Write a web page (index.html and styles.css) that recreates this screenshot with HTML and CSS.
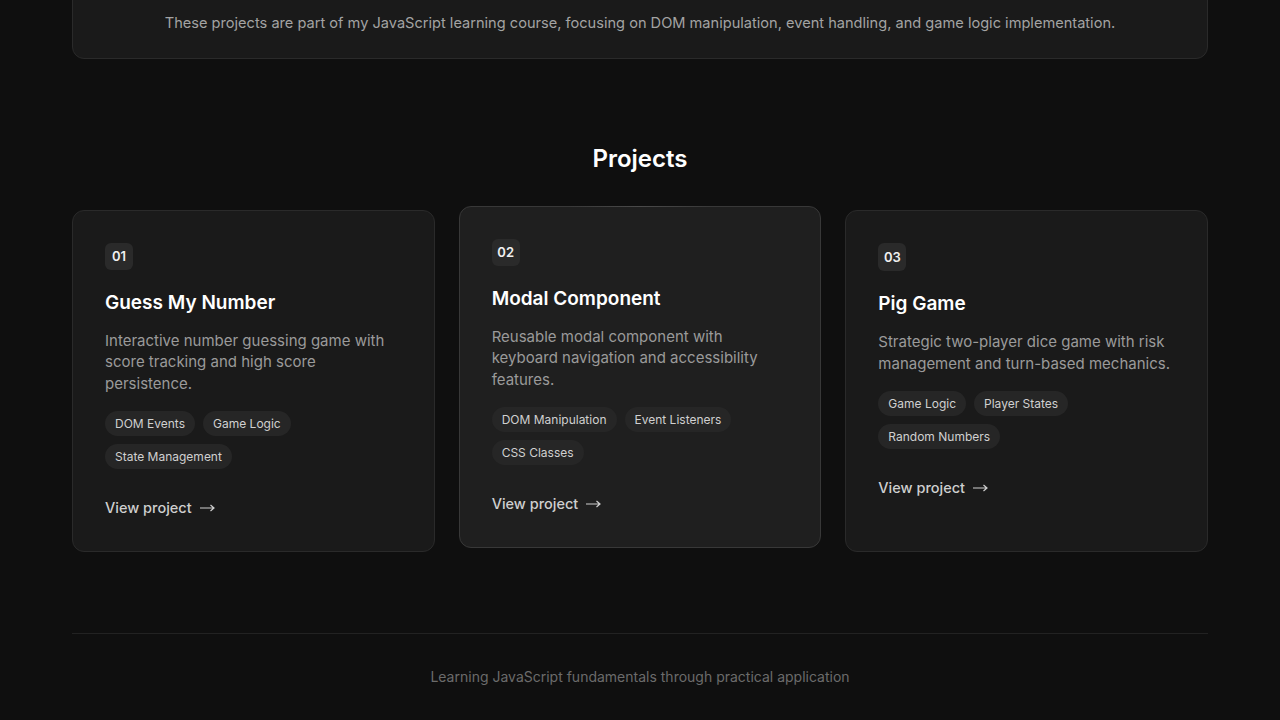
FILE: index.html
```html
<!DOCTYPE html>
<html lang="en">
<head>
  <meta charset="UTF-8" />
  <title>JavaScript Projects</title>
  <link rel="stylesheet" href="styles.css">
</head>
<body>
  <main class="container">
    <section class="intro">
      <p>These projects are part of my JavaScript learning course, focusing on DOM manipulation, event handling, and game logic implementation.</p>
    </section>

    <section class="projects">
      <h2>Projects</h2>
      <div class="grid">
        <article class="card">
          <span class="num">01</span>
          <h3>Guess My Number</h3>
          <p class="desc">Interactive number guessing game with score tracking and high score persistence.</p>
          <div class="tags">
            <span class="tag">DOM Events</span>
            <span class="tag">Game Logic</span>
            <span class="tag">State Management</span>
          </div>
          <a class="link" href="#">View project
            <svg class="arrow" width="15" height="8" viewBox="0 0 15 8"><path d="M0 4h14M10.5 1l3.5 3-3.5 3" fill="none" stroke="currentColor" stroke-width="1.2"/></svg>
          </a>
        </article>

        <article class="card active">
          <span class="num">02</span>
          <h3>Modal Component</h3>
          <p class="desc">Reusable modal component with keyboard navigation and accessibility features.</p>
          <div class="tags">
            <span class="tag">DOM Manipulation</span>
            <span class="tag">Event Listeners</span>
            <span class="tag">CSS Classes</span>
          </div>
          <a class="link" href="#">View project
            <svg class="arrow" width="15" height="8" viewBox="0 0 15 8"><path d="M0 4h14M10.5 1l3.5 3-3.5 3" fill="none" stroke="currentColor" stroke-width="1.2"/></svg>
          </a>
        </article>

        <article class="card">
          <span class="num">03</span>
          <h3>Pig Game</h3>
          <p class="desc">Strategic two-player dice game with risk management and turn-based mechanics.</p>
          <div class="tags">
            <span class="tag">Game Logic</span>
            <span class="tag">Player States</span>
            <span class="tag">Random Numbers</span>
          </div>
          <a class="link" href="#">View project
            <svg class="arrow" width="15" height="8" viewBox="0 0 15 8"><path d="M0 4h14M10.5 1l3.5 3-3.5 3" fill="none" stroke="currentColor" stroke-width="1.2"/></svg>
          </a>
        </article>
      </div>
    </section>

    <footer class="footer">
      <p>Learning JavaScript fundamentals through practical application</p>
    </footer>
  </main>
</body>
</html>
```

FILE: styles.css
```css
body {
  margin: 0;
  background: #0f0f0f;
  color: #fff;
  font-family: 'Inter', 'DejaVu Sans', sans-serif;
  overflow: hidden;
}

.container {
  width: 1136px;
  margin: 0 auto;
}

.intro {
  margin-top: -20px;
  padding: 30px 32px 23px;
  background: #1a1a1a;
  border: 1px solid #2a2a2a;
  border-radius: 12px;
  text-align: center;
}

.intro p {
  margin: 0;
  font-size: 14.6px;
  line-height: 24px;
  color: #a3a3a3;
}

.projects {
  padding-top: 84px;
}

.projects h2 {
  margin: 0 0 35px;
  text-align: center;
  font-size: 24px;
  line-height: 32px;
  font-weight: 600;
}

.grid {
  display: grid;
  grid-template-columns: repeat(3, 1fr);
  gap: 24px;
  align-items: start;
}

.card {
  position: relative;
  display: flex;
  flex-direction: column;
  align-items: flex-start;
  height: 342px;
  box-sizing: border-box;
  padding: 32px;
  background: #1a1a1a;
  border: 1px solid #2a2a2a;
  border-radius: 12px;
}

.card.active {
  background: #1f1f1f;
  border-color: #383838;
  transform: translateY(-4px);
}

.card.active::before {
  content: "";
  position: absolute;
  top: -1px;
  left: 30%;
  right: 30%;
  height: 1px;
  background: linear-gradient(90deg, transparent, #4a4a4a, transparent);
}

.num {
  display: inline-flex;
  align-items: center;
  justify-content: center;
  width: 28px;
  height: 28px;
  border-radius: 6px;
  background: #2a2a2a;
  font-size: 13px;
  font-weight: 600;
  color: #f0f0f0;
}

.card h3 {
  margin: 19px 0 13px;
  font-size: 19px;
  line-height: 28px;
  font-weight: 600;
}

.desc {
  margin: 0 0 17px;
  font-size: 15px;
  line-height: 21.5px;
  color: #9a9a9a;
}

.tags {
  display: flex;
  flex-wrap: wrap;
  gap: 8px;
}

.tag {
  height: 25px;
  line-height: 25px;
  padding: 0 10px;
  border-radius: 13px;
  background: #262626;
  font-size: 12px;
  color: #d0d0d0;
}

.link {
  display: inline-flex;
  align-items: center;
  gap: 8px;
  margin-top: 28px;
  font-size: 14.5px;
  line-height: 22px;
  font-weight: 500;
  color: #cfcfcf;
  text-decoration: none;
}

.footer {
  margin-top: 81px;
  border-top: 1px solid #222;
  text-align: center;
}

.footer p {
  margin: 33px 0;
  font-size: 14px;
  line-height: 20px;
  color: #6b6b6b;
}
```
